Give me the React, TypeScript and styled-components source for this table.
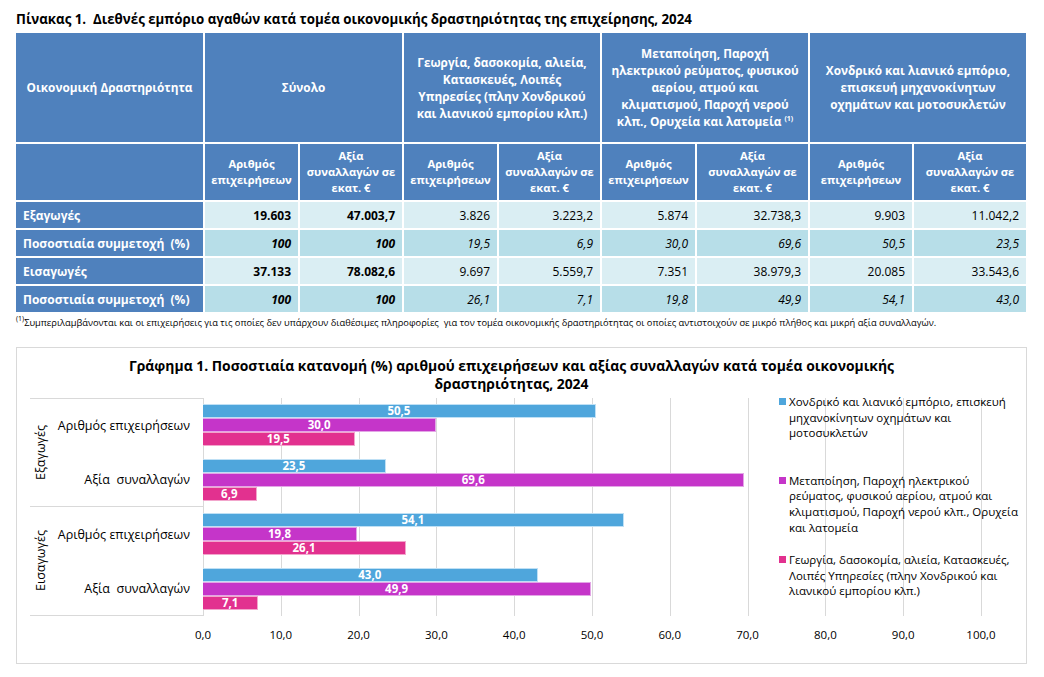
import React from 'react';
import styled, { createGlobalStyle } from 'styled-components';

const GlobalStyle = createGlobalStyle`
  html, body { margin: 0; padding: 0; background: #ffffff; }
  body { font-family: "Open Sans", "Noto Sans", sans-serif; color: #000000; }
`;

const Page = styled.div`
  width: 1044px;
  height: 677px;
  box-sizing: border-box;
  padding: 9px 0 0 16px;
  overflow: hidden;
`;

const Title = styled.h1`
  margin: 0;
  height: 24px;
  font-size: 13.3px;
  font-weight: 700;
  line-height: 20px;
  white-space: pre;
`;

const Table = styled.div`
  display: grid;
  grid-template-columns: 187px 93px 102px 93px 101px 93px 111px 102px 112px;
  grid-template-rows: 109px 56px repeat(4, 26px);
  gap: 2px;
  width: 1010px;
`;

const HeadCell = styled.div<{ $span?: number }>`
  grid-column: span ${(p) => p.$span ?? 1};
  background: #4f81bd;
  color: #ffffff;
  font-weight: 700;
  font-size: 11.8px;
  line-height: 17px;
  display: flex;
  align-items: center;
  justify-content: center;
  text-align: center;
  white-space: nowrap;
`;

const SubHeadCell = styled(HeadCell)`
  line-height: 16px;
  font-size: 11.2px;
`;

const RowLabel = styled.div`
  background: #4f81bd;
  color: #ffffff;
  font-weight: 700;
  font-size: 12px;
  display: flex;
  align-items: center;
  padding-left: 7px;
  white-space: pre;
`;

const DataCell = styled.div<{ $dark?: boolean; $bold?: boolean; $italic?: boolean }>`
  background: ${(p) => (p.$dark ? '#b7dee8' : '#daeef3')};
  font-weight: ${(p) => (p.$bold ? 700 : 400)};
  font-style: ${(p) => (p.$italic ? 'italic' : 'normal')};
  font-size: 12px;
  display: flex;
  align-items: center;
  justify-content: flex-end;
  padding-right: 7px;
`;

const Sup = styled.sup`
  font-size: 7px;
  vertical-align: 5px;
  line-height: 0;
`;

const Footnote = styled.p`
  margin: 5px 0 0 0;
  font-size: 9.3px;
  line-height: 12px;
  white-space: pre;
`;

const ChartBox = styled.div`
  position: relative;
  margin-top: 18px;
  width: 1011px;
  height: 317px;
  box-sizing: border-box;
  border: 1px solid #d9d9d9;
  padding-top: 9px;
`;

const ChartTitle = styled.h2`
  margin: 0 20px 0 0;
  font-size: 13.9px;
  font-weight: 700;
  line-height: 18px;
  text-align: center;
  white-space: nowrap;
`;

const ChartBody = styled.div`
  display: flex;
  margin-top: 5px;
  padding-left: 13px;
`;

const LabelColumn = styled.div`
  width: 173px;
  display: flex;
  flex-direction: column;
`;

const Group = styled.div<{ $first?: boolean }>`
  height: 109px;
  box-sizing: border-box;
  border-bottom: 1px solid #d9d9d9;
  border-top: ${(p) => (p.$first ? '1px solid #d9d9d9' : 'none')};
  display: flex;
`;

const GroupName = styled.div`
  width: 20px;
  display: flex;
  align-items: center;
  justify-content: center;
  writing-mode: vertical-rl;
  transform: rotate(180deg);
  font-size: 12.5px;
`;

const SubLabels = styled.div`
  flex: 1;
  display: flex;
  flex-direction: column;
`;

const SubLabel = styled.div`
  flex: 1;
  display: flex;
  align-items: center;
  justify-content: flex-end;
  padding-right: 13px;
  font-size: 12.5px;
  white-space: pre;
`;

const UNIT = 7.78;

const Plot = styled.div`
  width: 779px;
  height: 218px;
  display: flex;
  flex-direction: column;
  background: repeating-linear-gradient(
    to right,
    #d9d9d9 0px,
    #d9d9d9 1px,
    transparent 1px,
    transparent ${UNIT * 10}px
  );
`;

const Category = styled.div`
  height: 54.5px;
  display: flex;
  flex-direction: column;
  justify-content: center;
`;

const Bar = styled.div<{ $color: string; $edge: string }>`
  height: 14px;
  box-sizing: border-box;
  background: ${(p) => p.$color};
  border: 1px solid ${(p) => p.$edge};
  border-left: none;
  color: #ffffff;
  font-weight: 700;
  font-size: 11.5px;
  line-height: 12px;
  text-align: center;
  white-space: nowrap;
`;

const AxisRow = styled.div`
  display: flex;
  margin: 11px 0 0 ${13 + 173 - UNIT * 5}px;
`;

const Tick = styled.div`
  width: ${UNIT * 10}px;
  text-align: center;
  font-size: 11.5px;
  line-height: 16px;
`;

const Legend = styled.div`
  position: absolute;
  left: 762px;
  top: 46px;
  width: 250px;
`;

const LegendItem = styled.div<{ $gap: number }>`
  display: flex;
  align-items: flex-start;
  margin-top: ${(p) => p.$gap}px;
  font-size: 11.5px;
  line-height: 15.7px;
`;

const Swatch = styled.span<{ $color: string }>`
  flex: none;
  width: 7px;
  height: 7px;
  margin: 4px 3px 0 0;
  background: ${(p) => p.$color};
`;

const SERIES = [
  { color: '#4fa6dc', edge: '#bfe0f5' },
  { color: '#c535c9', edge: '#e3a6e6' },
  { color: '#e2318f', edge: '#f2a6cc' },
];

const groups = [
  {
    name: 'Εξαγωγές',
    cats: [
      { label: 'Αριθμός επιχειρήσεων', vals: [50.5, 30.0, 19.5] },
      { label: 'Αξία  συναλλαγών', vals: [23.5, 69.6, 6.9] },
    ],
  },
  {
    name: 'Εισαγωγές',
    cats: [
      { label: 'Αριθμός επιχειρήσεων', vals: [54.1, 19.8, 26.1] },
      { label: 'Αξία  συναλλαγών', vals: [43.0, 49.9, 7.1] },
    ],
  },
];

const rows = [
  { label: 'Εξαγωγές', dark: false, italic: false, vals: ['19.603', '47.003,7', '3.826', '3.223,2', '5.874', '32.738,3', '9.903', '11.042,2'] },
  { label: 'Ποσοστιαία συμμετοχή  (%)', dark: true, italic: true, vals: ['100', '100', '19,5', '6,9', '30,0', '69,6', '50,5', '23,5'] },
  { label: 'Εισαγωγές', dark: false, italic: false, vals: ['37.133', '78.082,6', '9.697', '5.559,7', '7.351', '38.979,3', '20.085', '33.543,6'] },
  { label: 'Ποσοστιαία συμμετοχή  (%)', dark: true, italic: true, vals: ['100', '100', '26,1', '7,1', '19,8', '49,9', '54,1', '43,0'] },
];

const fmt = (v: number) => v.toFixed(1).replace('.', ',');

const Head = ({ span, children }: { span?: number; children?: React.ReactNode }) => (
  <HeadCell $span={span}>
    <span>{children}</span>
  </HeadCell>
);

const SubHeads = () => (
  <>
    <SubHeadCell>
      <span>
        Αριθμός
        <br />
        επιχειρήσεων
      </span>
    </SubHeadCell>
    <SubHeadCell>
      <span>
        Αξία
        <br />
        συναλλαγών σε
        <br />
        εκατ. €
      </span>
    </SubHeadCell>
  </>
);

export default function App() {
  return (
    <Page>
      <GlobalStyle />
      <Title>{'Πίνακας 1.  Διεθνές εμπόριο αγαθών κατά τομέα οικονομικής δραστηριότητας της επιχείρησης, 2024'}</Title>
      <Table>
        <Head>Οικονομική Δραστηριότητα</Head>
        <Head span={2}>Σύνολο</Head>
        <Head span={2}>
          Γεωργία, δασοκομία, αλιεία,
          <br />
          Κατασκευές, Λοιπές
          <br />
          Υπηρεσίες (πλην Χονδρικού
          <br />
          και λιανικού εμπορίου κλπ.)
        </Head>
        <Head span={2}>
          Μεταποίηση, Παροχή
          <br />
          ηλεκτρικού ρεύματος, φυσικού
          <br />
          αερίου, ατμού και
          <br />
          κλιματισμού, Παροχή νερού
          <br />
          κλπ., Ορυχεία και λατομεία <Sup>(1)</Sup>
        </Head>
        <Head span={2}>
          Χονδρικό και λιανικό εμπόριο,
          <br />
          επισκευή μηχανοκίνητων
          <br />
          οχημάτων και μοτοσυκλετών
        </Head>
        <SubHeadCell />
        <SubHeads />
        <SubHeads />
        <SubHeads />
        <SubHeads />
        {rows.map((r, ri) => (
          <React.Fragment key={ri}>
            <RowLabel>{r.label}</RowLabel>
            {r.vals.map((v, vi) => (
              <DataCell key={vi} $dark={r.dark} $italic={r.italic} $bold={vi < 2}>
                {v}
              </DataCell>
            ))}
          </React.Fragment>
        ))}
      </Table>
      <Footnote>
        <Sup>(1)</Sup>
        {'Συμπεριλαμβάνονται και οι επιχειρήσεις για τις οποίες δεν υπάρχουν διαθέσιμες πληροφορίες  για τον τομέα οικονομικής δραστηριότητας οι οποίες αντιστοιχούν σε μικρό πλήθος και μικρή αξία συναλλαγών.'}
      </Footnote>
      <ChartBox>
        <ChartTitle>
          Γράφημα 1. Ποσοστιαία κατανομή (%) αριθμού επιχειρήσεων και αξίας συναλλαγών κατά τομέα οικονομικής
          <br />
          δραστηριότητας, 2024
        </ChartTitle>
        <ChartBody>
          <LabelColumn>
            {groups.map((g, gi) => (
              <Group key={gi} $first={gi === 0}>
                <GroupName>{g.name}</GroupName>
                <SubLabels>
                  {g.cats.map((c, ci) => (
                    <SubLabel key={ci}>{c.label}</SubLabel>
                  ))}
                </SubLabels>
              </Group>
            ))}
          </LabelColumn>
          <Plot>
            {groups.flatMap((g, gi) =>
              g.cats.map((c, ci) => (
                <Category key={`${gi}-${ci}`}>
                  {c.vals.map((v, si) => (
                    <Bar
                      key={si}
                      $color={SERIES[si].color}
                      $edge={SERIES[si].edge}
                      style={{ width: `${v * UNIT}px` }}
                    >
                      {fmt(v)}
                    </Bar>
                  ))}
                </Category>
              ))
            )}
          </Plot>
        </ChartBody>
        <AxisRow>
          {Array.from({ length: 11 }, (_, i) => (
            <Tick key={i}>{fmt(i * 10)}</Tick>
          ))}
        </AxisRow>
        <Legend>
          <LegendItem $gap={0}>
            <Swatch $color={SERIES[0].color} />
            <span>
              Χονδρικό και λιανικό εμπόριο, επισκευή
              <br />
              μηχανοκίνητων οχημάτων και
              <br />
              μοτοσυκλετών
            </span>
          </LegendItem>
          <LegendItem $gap={31.5}>
            <Swatch $color={SERIES[1].color} />
            <span>
              Μεταποίηση, Παροχή ηλεκτρικού
              <br />
              ρεύματος, φυσικού αερίου, ατμού και
              <br />
              κλιματισμού, Παροχή νερού κλπ., Ορυχεία
              <br />
              και λατομεία
            </span>
          </LegendItem>
          <LegendItem $gap={16.5}>
            <Swatch $color={SERIES[2].color} />
            <span>
              Γεωργία, δασοκομία, αλιεία, Κατασκευές,
              <br />
              Λοιπές Υπηρεσίες (πλην Χονδρικού και
              <br />
              λιανικού εμπορίου κλπ.)
            </span>
          </LegendItem>
        </Legend>
      </ChartBox>
    </Page>
  );
}
